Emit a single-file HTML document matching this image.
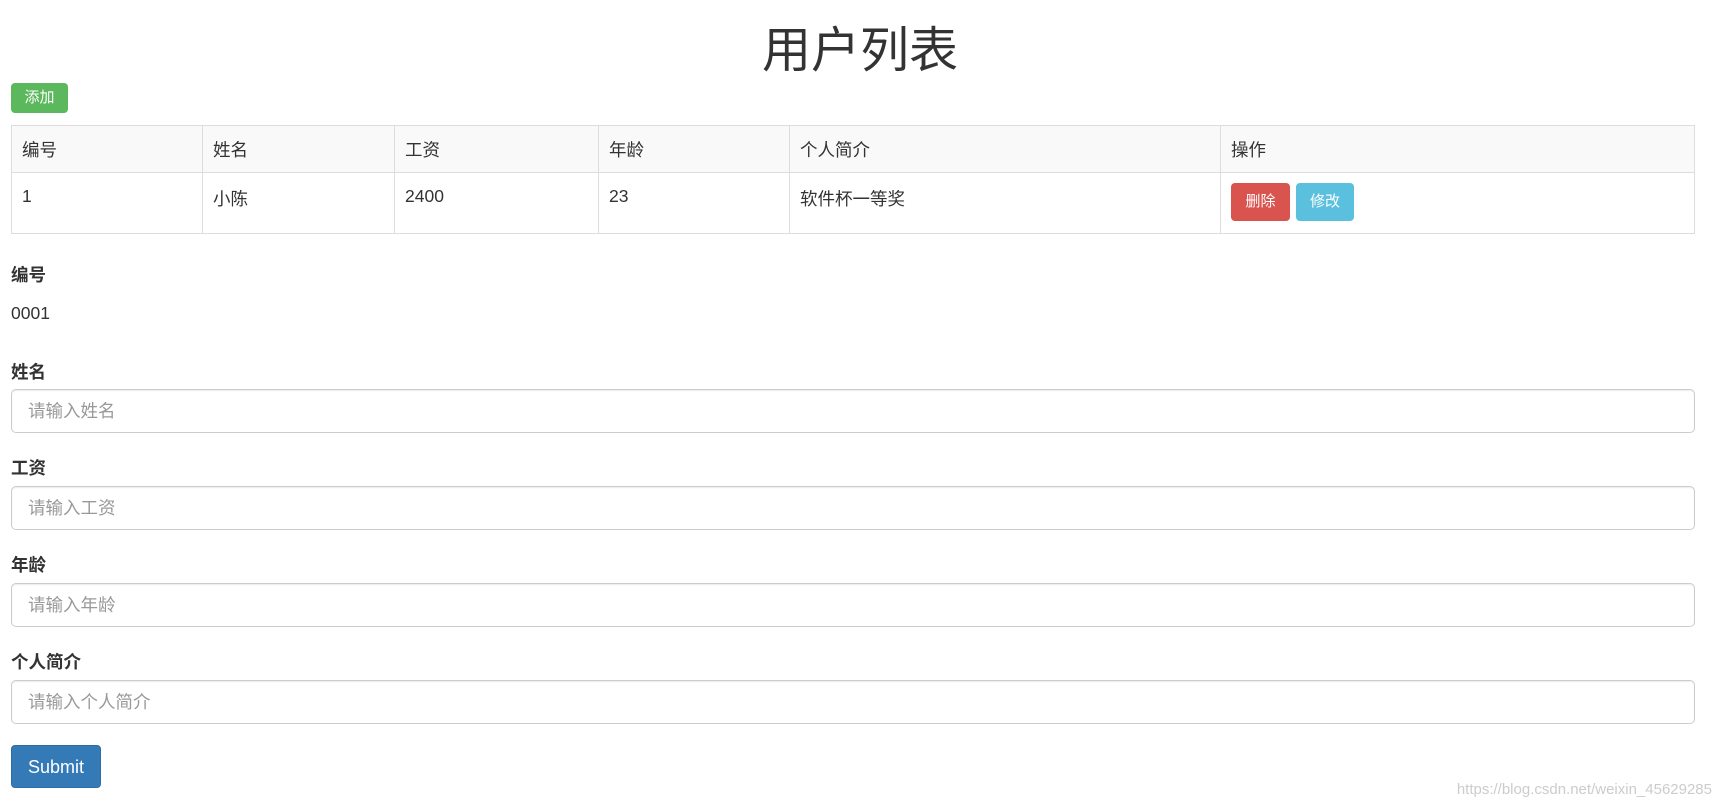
<!DOCTYPE html>
<html><head><meta charset="utf-8"><style>
*{box-sizing:border-box;margin:0;padding:0}
body{width:1720px;height:808px;background:#fff;font-family:"Liberation Sans","Noto Sans CJK SC",sans-serif;color:#333;position:relative;overflow:hidden;font-size:17.5px}
.a{position:absolute}
h1{position:absolute;left:0;width:1720px;top:18px;text-align:center;font-weight:400;font-size:49px;line-height:66px;color:#333}
.btn{position:absolute;color:#fff;border-radius:4px;text-align:center;font-size:15px}
table{position:absolute;left:11px;top:125px;width:1684px;border-collapse:collapse}
td,th{border:1px solid #ddd;text-align:left;font-weight:400;padding:0 10px;vertical-align:top}
th{background:#f9f9f9;height:47px;vertical-align:middle}
td{height:61px;padding-top:13px}
label{position:absolute;left:11px;font-weight:700;font-size:17.5px}
.in{position:absolute;left:11px;width:1684px;height:44px;border:1px solid #ccc;border-radius:5px;box-shadow:inset 0 1px 1px rgba(0,0,0,.075);padding-left:16px;line-height:42px;color:#999;font-size:17.5px}
</style></head><body>
<h1>用户列表</h1>
<div class="btn" style="left:11px;top:83px;width:57px;height:30px;line-height:30px;background:#5cb85c">添加</div>
<table>
<tr><th style="width:191px">编号</th><th style="width:192px">姓名</th><th style="width:204px">工资</th><th style="width:191px">年龄</th><th style="width:431px">个人简介</th><th>操作</th></tr>
<tr><td>1</td><td>小陈</td><td>2400</td><td>23</td><td>软件杯一等奖</td><td></td></tr>
</table>
<div class="btn" style="left:1231px;top:183px;width:59px;height:38px;line-height:38px;background:#d9534f">删除</div>
<div class="btn" style="left:1296px;top:183px;width:58px;height:38px;line-height:38px;background:#5bc0de">修改</div>
<label style="top:262px">编号</label>
<div class="a" style="left:11px;top:303px">0001</div>
<label style="top:359px">姓名</label>
<div class="in" style="top:389px">请输入姓名</div>
<label style="top:455px">工资</label>
<div class="in" style="top:486px">请输入工资</div>
<label style="top:552px">年龄</label>
<div class="in" style="top:583px">请输入年龄</div>
<label style="top:649px">个人简介</label>
<div class="in" style="top:680px">请输入个人简介</div>
<div class="btn" style="left:11px;top:745px;width:90px;height:43px;line-height:43px;background:#337ab7;font-size:18px;border:1px solid #2e6da4">Submit</div>
<div class="a" style="right:8px;top:781px;color:#ccc;font-size:15px">https://blog.csdn.net/weixin_45629285</div>
</body></html>
